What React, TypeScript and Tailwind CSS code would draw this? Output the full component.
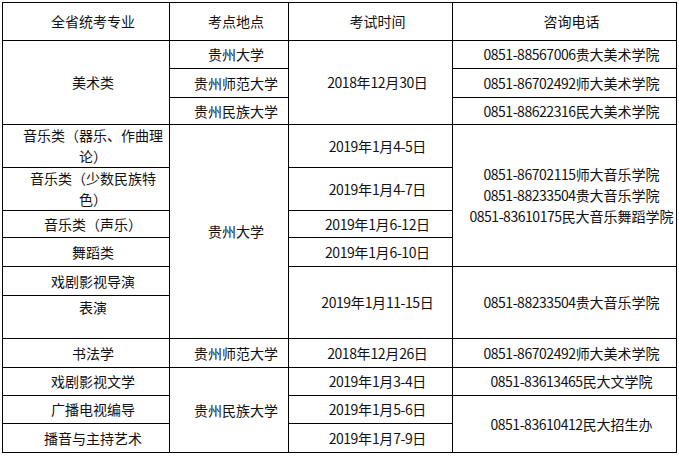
import type { ReactNode } from "react";

type Cell = {
  lines: string[];
  span?: string;
  top?: boolean;
};

const cells: Cell[] = [
  // header
  { lines: ["全省统考专业"] },
  { lines: ["考点地点"] },
  { lines: ["考试时间"] },
  { lines: ["咨询电话"] },

  // 美术类
  { lines: ["美术类"], span: "row-span-3" },
  { lines: ["贵州大学"] },
  { lines: ["2018年12月30日"], span: "row-span-3" },
  { lines: ["0851-88567006贵大美术学院"] },
  { lines: ["贵州师范大学"] },
  { lines: ["0851-86702492师大美术学院"] },
  { lines: ["贵州民族大学"] },
  { lines: ["0851-88622316民大美术学院"] },

  // 音乐 / 舞蹈 / 戏剧
  { lines: ["音乐类（器乐、作曲理", "论）"] },
  { lines: ["贵州大学"], span: "row-span-6" },
  { lines: ["2019年1月4-5日"] },
  {
    lines: [
      "0851-86702115师大音乐学院",
      "0851-88233504贵大音乐学院",
      "0851-83610175民大音乐舞蹈学院",
    ],
    span: "row-span-4",
  },
  { lines: ["音乐类（少数民族特", "色）"] },
  { lines: ["2019年1月4-7日"] },
  { lines: ["音乐类（声乐）"] },
  { lines: ["2019年1月6-12日"] },
  { lines: ["舞蹈类"] },
  { lines: ["2019年1月6-10日"] },
  { lines: ["戏剧影视导演"] },
  { lines: ["2019年1月11-15日"], span: "row-span-2" },
  { lines: ["0851-88233504贵大音乐学院"], span: "row-span-2" },
  { lines: ["表演"], top: true },

  // 书法 / 民大
  { lines: ["书法学"] },
  { lines: ["贵州师范大学"] },
  { lines: ["2018年12月26日"] },
  { lines: ["0851-86702492师大美术学院"] },
  { lines: ["戏剧影视文学"] },
  { lines: ["贵州民族大学"], span: "row-span-3" },
  { lines: ["2019年1月3-4日"] },
  { lines: ["0851-83613465民大文学院"] },
  { lines: ["广播电视编导"] },
  { lines: ["2019年1月5-6日"] },
  { lines: ["0851-83610412民大招生办"], span: "row-span-2" },
  { lines: ["播音与主持艺术"] },
  { lines: ["2019年1月7-9日"] },
];

// digits in the original are half-width (7px), tighten the latin runs a bit
function Line({ text }: { text: string }) {
  const parts = text.split(/([0-9-]+)/).filter(Boolean);
  return (
    <div>
      {parts.map((p, i): ReactNode =>
        /^[0-9-]+$/.test(p) ? (
          <span key={i} className="tracking-[-0.45px]">
            {p}
          </span>
        ) : (
          <span key={i}>{p}</span>
        )
      )}
    </div>
  );
}

export default function App() {
  return (
    <div className="h-[456px] w-[679px] bg-white pl-[2px] pt-[2px] font-['Noto_Sans_CJK_SC',sans-serif] text-[14px] leading-[21px] text-[#111]">
      <div className="grid w-fit grid-cols-[166px_118px_163px_223px] grid-rows-[37px_27px_28px_26px_42px_42px_26px_28px_28px_42px_28px_27px_27px_28px] gap-px bg-black p-px">
        {cells.map((cell, i) => (
          <div
            key={i}
            className={`flex justify-center whitespace-nowrap bg-white pl-[14px] text-center ${
              cell.top ? "items-start pt-[1px]" : "items-center"
            } ${cell.span ?? ""}`}
          >
            <div>
              {cell.lines.map((l, j) => (
                <Line key={j} text={l} />
              ))}
            </div>
          </div>
        ))}
      </div>
    </div>
  );
}
